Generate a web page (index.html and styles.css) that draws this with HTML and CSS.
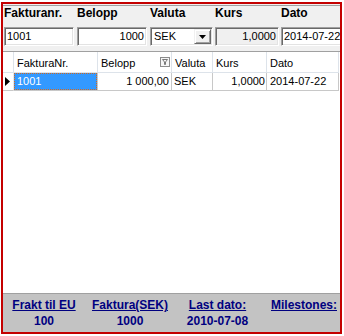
FILE: index.html
```html
<!DOCTYPE html>
<html>
<head>
<meta charset="utf-8">
<link rel="stylesheet" href="styles.css">
</head>
<body>
<div class="frame">
  <div class="form">
    <div class="fields">
      <div class="lbl">Fakturanr.</div>
      <div class="lbl">Belopp</div>
      <div class="lbl">Valuta</div>
      <div class="lbl">Kurs</div>
      <div class="lbl">Dato</div>
      <div class="tb w70">1001</div>
      <div class="tb w70 right">1000</div>
      <div class="tb combo"><span class="ctext">SEK</span><span class="cbtn"><svg width="7" height="4" viewBox="0 0 7 4"><polygon points="0,0 7,0 3.5,4" fill="#000"/></svg></span></div>
      <div class="tb w64 right disabled">1,0000</div>
      <div class="tb w64">2014-07-22</div>
    </div>
    <div class="grid">
      <div class="row hdr">
        <div class="c ind"></div>
        <div class="c c1">FakturaNr.</div>
        <div class="c c2">Belopp<svg class="filt" width="10" height="10" viewBox="0 0 10 10"><rect x="0.5" y="0.5" width="9" height="9" fill="#f6f6f6" stroke="#8c8c8c"/><polygon points="2.5,2.5 7.5,2.5 5.5,5 5.5,7.5 4.5,7.5 4.5,5" fill="none" stroke="#7a7a7a" stroke-width="1" stroke-linejoin="round"/></svg></div>
        <div class="c c3">Valuta</div>
        <div class="c c4">Kurs</div>
        <div class="c c5">Dato</div>
      </div>
      <div class="row data">
        <div class="c ind"><svg width="5" height="9" viewBox="0 0 5 9"><polygon points="0,0 5,4.5 0,9" fill="#000"/></svg></div>
        <div class="c c1 sel"><span class="focus">1001</span></div>
        <div class="c c2 right">1 000,00</div>
        <div class="c c3">SEK</div>
        <div class="c c4 right">1,0000</div>
        <div class="c c5">2014-07-22</div>
      </div>
    </div>
    <div class="footer">
      <div class="fl">Frakt til EU</div>
      <div class="fl">Faktura(SEK)</div>
      <div class="fl">Last dato:</div>
      <div class="fl m">Milestones:</div>
      <div class="fv">100</div>
      <div class="fv">1000</div>
      <div class="fv">2010-07-08</div>
      <div class="fv m"></div>
    </div>
  </div>
</div>
</body>
</html>
```
FILE: styles.css
```css
* { box-sizing: border-box; }
body {
  margin: 0;
  padding: 2px 0 0 1px;
  background: #fff;
  font-family: "Liberation Sans", Arial, sans-serif;
}
.frame {
  width: 341px;
  height: 332px;
  border: 2px solid #c40000;
  overflow: hidden;
}
.form {
  height: 100%;
  background: #f0f0f0;
  padding-top: 1px;
  display: flex;
  flex-direction: column;
}
.fields {
  border-top: 1px solid #a0a0a0;
  padding-left: 1px;
  display: grid;
  grid-template-columns: 73px 73px 65px 66px 1fr;
  grid-template-rows: 21px 19px;
}
.lbl {
  font-weight: bold;
  font-size: 12px;
  line-height: 15px;
  color: #000;
  white-space: nowrap;
}
.tb {
  height: 19px;
  border-style: solid;
  border-width: 1px;
  border-color: #a0a0a0 #fff #fff #a0a0a0;
  box-shadow: inset 1px 1px 0 #696969, inset -1px -1px 0 #e3e3e3;
  background: #fff;
  font-size: 11px;
  line-height: 15px;
  padding: 1px 2px 1px 2px;
  white-space: nowrap;
  color: #000;
}
.w70 { width: 70px; }
.w64 { width: 64px; }
.right { text-align: right; }
.disabled { background: #f0f0f0; }
.combo {
  width: 63px;
  display: flex;
  padding: 1px;
}
.ctext { flex: 1; padding-left: 2px; }
.cbtn {
  width: 17px;
  height: 15px;
  background: #f0f0f0;
  border-style: solid;
  border-width: 1px;
  border-color: #f0f0f0 #696969 #696969 #f0f0f0;
  box-shadow: inset 1px 1px 0 #fff, inset -1px -1px 0 #a0a0a0;
  display: flex;
  align-items: center;
  justify-content: center;
}
.cbtn svg { display: block; }
.grid {
  flex: 1;
  margin-top: 5px;
  background: #fff;
  border-top: 1px solid #a0a0a0;
  border-bottom: 1px solid #a0a0a0;
}
.row { display: flex; }
.c {
  font-size: 11px;
  white-space: nowrap;
  overflow: hidden;
  color: #000;
}
.hdr .c {
  height: 21px;
  line-height: 22px;
  border-right: 1px solid #dde3ea;
  border-bottom: 1px solid #dde3ea;
  padding-left: 3px;
}
.data .c {
  height: 18px;
  line-height: 17px;
  border-right: 1px solid #c8c8c8;
  border-bottom: 1px solid #c8c8c8;
  padding: 0 2px;
}
.ind { width: 11px; }
.c1 { width: 84px; }
.c2 { width: 74px; }
.c3 { width: 41px; }
.c4 { width: 54px; }
.c5 { width: 72px; }
.hdr .c2 { display: flex; align-items: flex-start; }
.hdr .c2 .filt { margin: 5px 1px 0 auto; display: block; flex: none; }
.data .ind {
  padding: 4px 0 0 2px;
  border-right-color: #e8e8e8;
}
.data .ind svg { display: block; }
.data .c4 { padding-right: 1px; }
.data .c3 { padding-left: 2px; }
.data .c5 { padding-left: 3px; }
.sel {
  background: #3399ff;
  color: #fff;
  padding: 0 !important;
}
.focus {
  display: block;
  height: 17px;
  outline: 1px dotted #d2691e;
  outline-offset: -1px;
  padding-left: 3px;
}
.footer {
  height: 38px;
  background: #c3c3c3;
  display: grid;
  grid-template-columns: 82px 90px 85px 1fr;
  grid-template-rows: 15px 15px;
  row-gap: 1px;
  padding-top: 4px;
  color: #000080;
  font-weight: bold;
  font-size: 12px;
  line-height: 15px;
  text-align: center;
  white-space: nowrap;
}
.fl { text-decoration: underline; }
.m { padding-left: 8px; }
```
